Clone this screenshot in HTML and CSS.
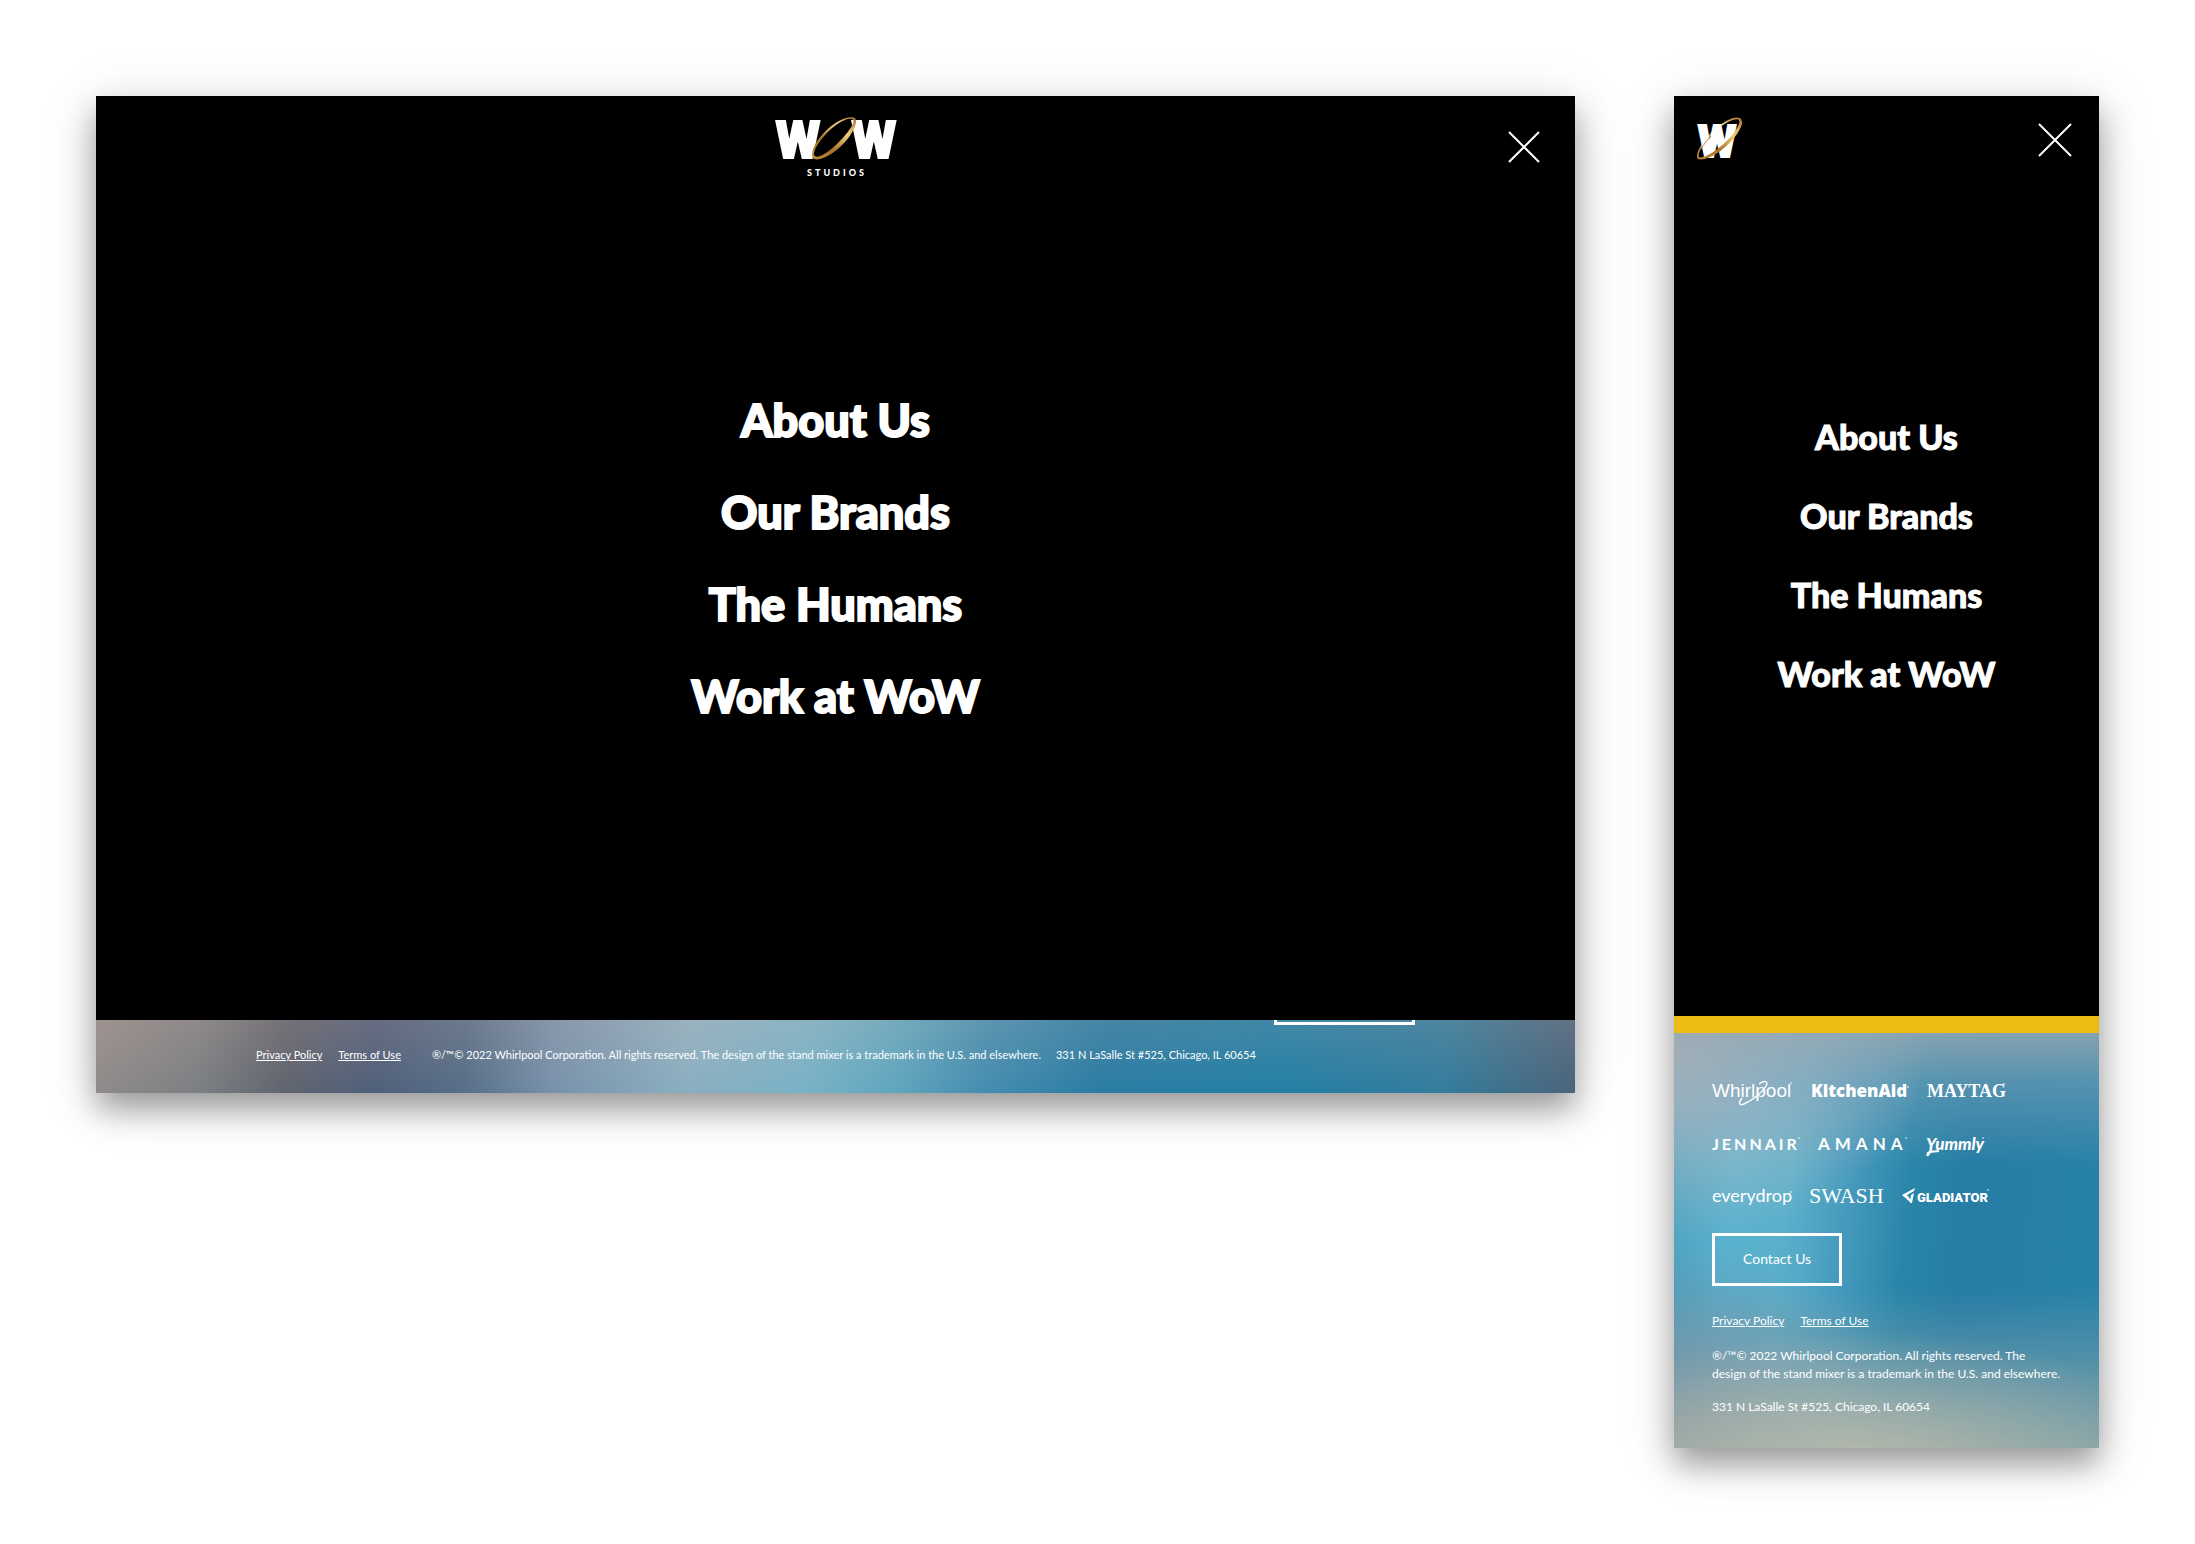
FILE: index.html
```html
<!DOCTYPE html>
<html lang="en">
<head>
    <meta charset="UTF-8">
    <meta name="viewport" content="width=device-width, initial-scale=1.0">
    <title>WoW Studios - Menu</title>
    <link rel="stylesheet" href="styles.css">
</head>
<body>
    <main class="showcase">
        <section class="screen desktop">
            <div class="overlay">
                <header class="topbar">
                    <a class="logo" href="#" aria-label="WoW Studios">
                        <svg width="126" height="62" viewBox="-2 0 126 62">
                            <defs>
                                <linearGradient id="gold" gradientUnits="objectBoundingBox" x1="0" y1="1" x2="1" y2="0">
                                    <stop offset="0" stop-color="#c08a35"/>
                                    <stop offset="0.35" stop-color="#a5722a"/>
                                    <stop offset="0.7" stop-color="#f0cd7c"/>
                                    <stop offset="1" stop-color="#a87428"/>
                                </linearGradient>
                            </defs>
                            <text class="mark" x="23" y="42" text-anchor="middle">W</text>
                            <text class="mark" x="99" y="42" text-anchor="middle">W</text>
                            <path fill="url(#gold)" fill-rule="evenodd" d="M38 42C34 34 46 16 62 6C71 1 81 -1 81 5C81 14 69 30 56 38C48 43 41 45 38 42ZM40 40C44 43 55 35 64 26C74 16 82 4 77 3C71 1 58 10 50 19C41 29 37 38 40 40Z"/>
                            <text class="studios" x="32" y="60">STUDIOS</text>
                        </svg>
                    </a>
                    <button class="close" type="button" aria-label="Close menu">
                        <svg width="32" height="32" viewBox="0 0 32 32"><path d="M1 1L31 31M31 1L1 31"/></svg>
                    </button>
                </header>
                <nav class="menu">
                    <a href="#">About Us</a>
                    <a href="#">Our Brands</a>
                    <a href="#">The Humans</a>
                    <a href="#">Work at WoW</a>
                </nav>
            </div>
            <footer class="footer">
                <a class="contact peek" href="#" aria-label="Contact Us"></a>
                <div class="links">
                    <a href="#">Privacy Policy</a>
                    <a href="#">Terms of Use</a>
                </div>
                <p class="copy">®/™© 2022 Whirlpool Corporation. All rights reserved. The design of the stand mixer is a trademark in the U.S. and elsewhere.</p>
                <p class="address">331 N LaSalle St #525, Chicago, IL 60654</p>
            </footer>
        </section>

        <section class="screen mobile">
            <div class="overlay">
                <header class="topbar">
                    <a class="logo" href="#" aria-label="WoW Studios">
                        <svg width="48" height="48" viewBox="0 0 48 48">
                            <path fill="none" stroke="url(#gold)" stroke-width="1.6" d="M3 43C-2 37 12 18 27 8C36 2 43 1 45 4"/>
                            <text class="mark-small" x="21" y="41" text-anchor="middle">W</text>
                            <path fill="none" stroke="#b98936" stroke-width="1" d="M5 33C8 28 11 24 15 20"/>
                            <path fill="url(#gold)" d="M1 41C2 45 10 44 20 38C33 30 44 16 46 8C47 4 44 2 40 2C43 3 44 5 43 8C40 16 31 26 20 34C12 40 4 43 1 41Z"/>
                        </svg>
                    </a>
                    <button class="close" type="button" aria-label="Close menu">
                        <svg width="32" height="32" viewBox="0 0 32 32"><path d="M0 0L32 32M32 0L0 32"/></svg>
                    </button>
                </header>
                <nav class="menu">
                    <a href="#">About Us</a>
                    <a href="#">Our Brands</a>
                    <a href="#">The Humans</a>
                    <a href="#">Work at WoW</a>
                </nav>
            </div>
            <footer class="footer">
                <div class="brands">
                    <div class="brand-row">
                        <svg width="81" height="28">
                            <text class="whirlpool" x="0" y="18">Whirlpool</text>
                            <path class="line" d="M47 5C52 1 57 2 54 7C50 14 39 22 32 25C27 27 26 24 30 19"/>
                            <circle class="reg" cx="79" cy="4" r="1"/>
                        </svg>
                        <svg width="98" height="28">
                            <text class="kitchenaid" x="0" y="18">KitchenAid</text>
                            <circle class="reg" cx="97" cy="8" r="1"/>
                        </svg>
                        <svg width="77" height="28">
                            <text class="maytag" x="0" y="18">MAYTAG</text>
                            <circle class="reg" cx="77" cy="5" r="1"/>
                        </svg>
                    </div>
                    <div class="brand-row">
                        <svg width="88" height="28">
                            <text class="jennair" x="0" y="19">JENNAIR</text>
                            <circle class="reg" cx="87" cy="7" r="1"/>
                        </svg>
                        <svg width="89" height="28">
                            <text class="amana" x="0" y="19">AMANA</text>
                            <circle class="reg" cx="88" cy="7" r="1"/>
                        </svg>
                        <svg width="58" height="28">
                            <text class="yummly" x="1" y="19">Yummly</text>
                            <path class="swirl" d="M6 18C4 25 1 26 3 22C5 20 9 21 14 20"/>
                            <circle class="reg" cx="58" cy="7" r="1"/>
                        </svg>
                    </div>
                    <div class="brand-row">
                        <svg width="79" height="28">
                            <text class="everydrop" x="0" y="19">everydrop</text>
                            <circle class="reg" cx="79" cy="9" r="1"/>
                        </svg>
                        <svg width="75" height="28">
                            <text class="swash" x="0" y="20">SWASH</text>
                        </svg>
                        <svg width="86" height="28">
                            <path fill="#fff" d="M0 12L13 5L12 8L5 12L9 17L8 19ZM9 12L12 10L10 20L8 20Z"/>
                            <text class="gladiator" x="15" y="19">GLADIATOR</text>
                            <circle class="reg" cx="86" cy="7" r="1"/>
                        </svg>
                    </div>
                </div>
                <a class="contact" href="#">Contact Us</a>
                <div class="links">
                    <a href="#">Privacy Policy</a>
                    <a href="#">Terms of Use</a>
                </div>
                <p class="copy">®/™© 2022 Whirlpool Corporation. All rights reserved. The design of the stand mixer is a trademark in the U.S. and elsewhere.</p>
                <p class="address">331 N LaSalle St #525, Chicago, IL 60654</p>
            </footer>
        </section>
    </main>
</body>
</html>
```
FILE: styles.css
```css
* {
    box-sizing: border-box;
}
body {
    margin: 0;
    background: white;
    font-family: Lato, "Open Sans", sans-serif;
    color: white;
}
p {
    margin: 0;
}
a {
    color: white;
}
svg {
    display: block;
    overflow: visible;
}
.showcase {
    display: flex;
    align-items: flex-start;
    gap: 99px;
    padding: 96px;
}
.screen {
    min-width: 0;
    box-shadow: 0 16px 30px rgba(0, 0, 0, 0.36), 0 8px 60px rgba(0, 0, 0, 0.1);
}
.desktop {
    flex: 1479;
}
.mobile {
    flex: 425;
}
.overlay {
    background: black;
}

/* top bar */
.topbar {
    display: flex;
    align-items: center;
    justify-content: space-between;
    padding: 20px 28px 20px 22px;
}
.desktop .topbar {
    display: grid;
    grid-template-columns: 1fr auto 1fr;
    padding: 20px 35px;
}
.desktop .logo {
    grid-column: 2;
}
.close {
    justify-self: end;
    padding: 0;
    border: none;
    background: none;
    cursor: pointer;
}
.close path {
    stroke: white;
    stroke-width: 2;
}
.mark, .mark-small {
    font-family: Roboto, sans-serif;
    font-weight: 900;
    font-size: 51px;
    fill: white;
    stroke: white;
    stroke-width: 2;
}
.mark-small {
    font-size: 44px;
}
.studios {
    font-weight: 900;
    font-size: 9px;
    letter-spacing: 3px;
    fill: white;
}

/* menu */
.menu {
    display: flex;
    flex-direction: column;
    align-items: center;
    gap: 31px;
    padding: 229px 20px 318px;
}
.menu a {
    font-size: 34px;
    line-height: 48px;
    font-weight: 900;
    text-decoration: none;
    -webkit-text-stroke: 1px white;
}
.desktop .menu {
    gap: 32px;
    padding: 192px 20px 294px;
}
.desktop .menu a {
    font-size: 45px;
    line-height: 60px;
    -webkit-text-stroke: 2px white;
}

/* footer */
.footer {
    font-size: 12px;
    line-height: 18px;
}
.links {
    display: flex;
    gap: 16px;
}
.desktop .footer {
    position: relative;
    overflow: hidden;
    display: flex;
    align-items: center;
    padding: 26px 160px 29px;
    font-size: 11px;
    background:
        linear-gradient(rgba(170, 160, 160, 0.2), rgba(0, 90, 130, 0.08)),
        linear-gradient(94deg, #9c8f8c 0%, #878383 7%, #67656d 13%, #56607a 19%, #5d7088 25%, #8196ae 31%, #96b6c6 40%, #83b9cc 48%, #68adc4 54%, #4a92b4 60%, #2d7fa6 68%, #2682a8 80%, #377f9f 91%, #50647a 100%);
}
.desktop .copy {
    margin-left: 31px;
}
.desktop .address {
    margin-left: 15px;
}
.mobile .footer {
    border-top: 17px solid #edbb11;
    padding: 46px 38px 32px;
    background:
        linear-gradient(rgba(150, 168, 178, 0.85) 0%, rgba(130, 165, 185, 0.5) 12%, rgba(120, 165, 190, 0) 32%),
        radial-gradient(ellipse 60% 45% at 0% 5%, rgba(205, 192, 190, 0.95) 0%, rgba(190, 190, 198, 0.5) 45%, rgba(180, 190, 200, 0) 100%),
        radial-gradient(ellipse 75% 30% at 45% 102%, rgba(190, 188, 172, 0.8) 0%, rgba(180, 182, 172, 0) 100%),
        linear-gradient(rgba(140, 165, 165, 0) 62%, rgba(140, 165, 170, 0.5) 82%, rgba(165, 175, 165, 0.7) 100%),
        radial-gradient(ellipse 50% 45% at 0% 95%, rgba(110, 125, 150, 0.8) 0%, rgba(110, 135, 165, 0) 100%),
        linear-gradient(96deg, #4aa0bd 0%, #5ab2ce 16%, #5ab0cb 28%, #4398bb 42%, #2a85a9 54%, #267da5 66%, #2882a8 100%);
    background-origin: padding-box;
}
.brands {
    display: flex;
    flex-direction: column;
    gap: 24px;
}
.brand-row {
    display: flex;
    gap: 18px;
}
.brands text {
    fill: white;
}
.line {
    fill: none;
    stroke: white;
    stroke-width: 1.4;
}
.swirl {
    fill: none;
    stroke: white;
    stroke-width: 2;
}
.reg {
    fill: rgba(255, 255, 255, 0.6);
}
.whirlpool {
    font-family: "Liberation Sans", sans-serif;
    font-size: 19px;
}
.kitchenaid {
    font-family: "Open Sans", sans-serif;
    font-weight: 800;
    font-size: 17px;
}
.maytag {
    font-family: "Liberation Serif", serif;
    font-weight: bold;
    font-size: 18px;
}
.jennair {
    font-weight: bold;
    font-size: 16px;
    letter-spacing: 3px;
}
.amana {
    font-weight: bold;
    font-size: 17px;
    letter-spacing: 5px;
}
.yummly {
    font-family: Lato, sans-serif;
    font-style: italic;
    font-weight: 900;
    font-size: 17px;
}
.everydrop {
    font-size: 18px;
}
.swash {
    font-family: "Liberation Serif", serif;
    font-size: 22px;
}
.gladiator {
    font-family: Roboto, sans-serif;
    font-weight: 900;
    font-size: 13px;
}
.contact {
    display: inline-block;
    margin-top: 22px;
    padding: 14px 28px 15px;
    border: 3px solid white;
    font-size: 14px;
    text-decoration: none;
}
.contact.peek {
    position: absolute;
    right: 160px;
    bottom: 68px;
    width: 141px;
    height: 53px;
    margin: 0;
}
.mobile .links {
    margin-top: 26px;
}
.mobile .copy {
    margin-top: 17px;
}
.mobile .address {
    margin-top: 15px;
}
```
